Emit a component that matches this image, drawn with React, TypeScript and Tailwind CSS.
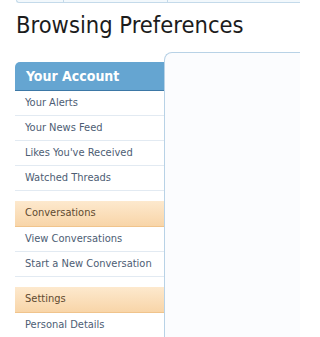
import React from "react";

const linkCls =
  "h-[25px] flex items-center pl-[10px] border-b border-[#e2eaf2] text-[11px] text-[#4d5d74] bg-white";
const subHeadCls =
  "h-[26px] flex items-center pl-[10px] border-b border-[#f0c48c] text-[11px] text-[#5f4a30] bg-gradient-to-b from-[#fde9ce] to-[#f8d5a8]";

function Group({ title, items }: { title: string; items: string[] }) {
  return (
    <div className="pb-[10px]">
      <div className={subHeadCls}>{title}</div>
      {items.map((t) => (
        <div key={t} className={linkCls}>
          {t}
        </div>
      ))}
    </div>
  );
}

export default function App() {
  return (
    <div
      className="w-[300px] h-[337px] overflow-hidden bg-white"
      style={{ fontFamily: '"DejaVu Sans Condensed", Lato, "Liberation Sans", sans-serif' }}
    >
      <div className="ml-[16px] flex h-[3px] border-b border-l border-[#c4daea] rounded-bl-[3px] bg-[#f2f8fc]">
        <div className="w-[47px] border-r border-[#c4daea]" />
        <div className="w-[104px] border-r border-[#c4daea]" />
        <div className="flex-1" />
      </div>
      <h1 className="ml-[16px] mt-[8px] text-[23.5px] leading-[29px] text-[#1c1c1c] font-normal">
        Browsing Preferences
      </h1>
      <div className="mt-[12px] flex">
        <div className="ml-[15px] w-[149px] mt-[10px]">
          <div className="pb-[10px]">
            <div className="h-[29px] flex items-center pl-[11px] rounded-tl-[5px] bg-[#65a5d1] border-b border-[#3d78a6] text-white font-bold text-[14px]">
              Your Account
            </div>
            {["Your Alerts", "Your News Feed", "Likes You've Received", "Watched Threads"].map((t) => (
              <div key={t} className={linkCls}>
                {t}
              </div>
            ))}
          </div>
          <Group title="Conversations" items={["View Conversations", "Start a New Conversation"]} />
          <Group title="Settings" items={["Personal Details"]} />
        </div>
        <div className="flex-1 h-[300px] border-l border-t border-[#b8d2e6] rounded-tl-[8px] bg-[#fbfcfe]" />
      </div>
    </div>
  );
}
